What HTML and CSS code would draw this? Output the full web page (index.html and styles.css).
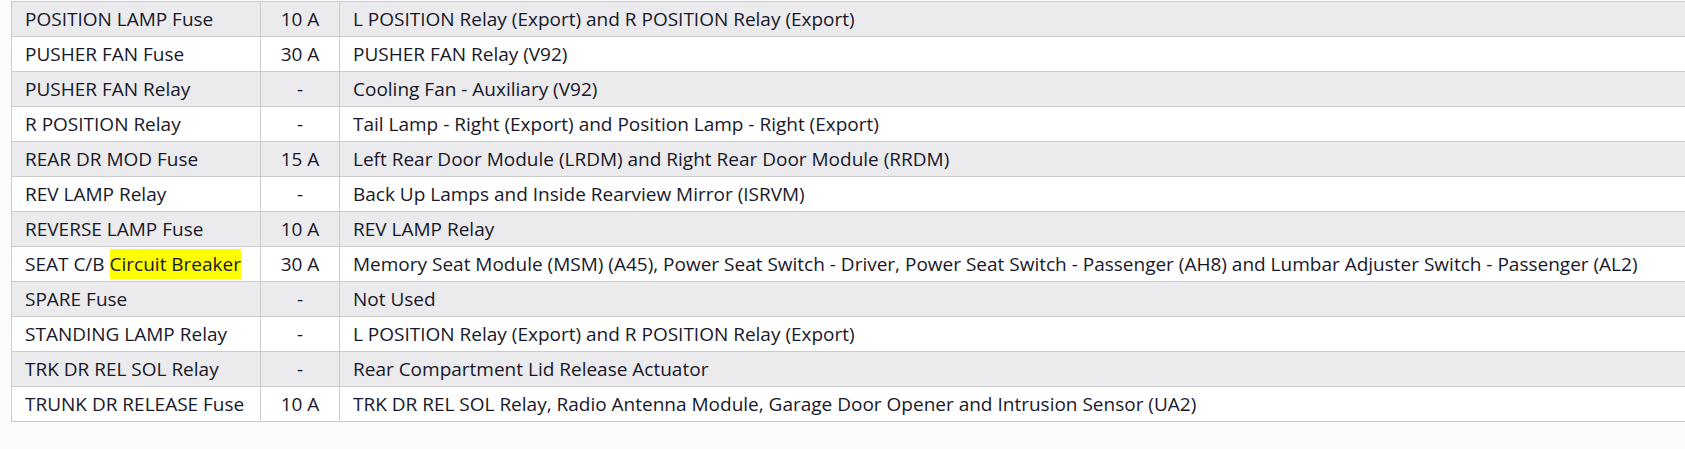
FILE: index.html
```html
<!DOCTYPE html>
<html>
<head>
<meta charset="utf-8">
<link rel="stylesheet" href="styles.css">
</head>
<body>
<div class="wrap">
<table class="fuses">
<colgroup><col class="c1"><col class="c2"><col class="c3"></colgroup>
<tbody>
<tr class="alt"><td>POSITION LAMP Fuse</td><td class="amp">10 A</td><td>L POSITION Relay (Export) and R POSITION Relay (Export)</td></tr>
<tr><td>PUSHER FAN Fuse</td><td class="amp">30 A</td><td>PUSHER FAN Relay (V92)</td></tr>
<tr class="alt"><td>PUSHER FAN Relay</td><td class="amp">-</td><td>Cooling Fan - Auxiliary (V92)</td></tr>
<tr><td>R POSITION Relay</td><td class="amp">-</td><td>Tail Lamp - Right (Export) and Position Lamp - Right (Export)</td></tr>
<tr class="alt"><td>REAR DR MOD Fuse</td><td class="amp">15 A</td><td>Left Rear Door Module (LRDM) and Right Rear Door Module (RRDM)</td></tr>
<tr><td>REV LAMP Relay</td><td class="amp">-</td><td>Back Up Lamps and Inside Rearview Mirror (ISRVM)</td></tr>
<tr class="alt"><td>REVERSE LAMP Fuse</td><td class="amp">10 A</td><td>REV LAMP Relay</td></tr>
<tr><td>SEAT C/B <mark class="hl">Circuit Breaker</mark></td><td class="amp">30 A</td><td>Memory Seat Module (MSM) (A45), Power Seat Switch - Driver, Power Seat Switch - Passenger (AH8) and Lumbar Adjuster Switch - Passenger (AL2)</td></tr>
<tr class="alt"><td>SPARE Fuse</td><td class="amp">-</td><td>Not Used</td></tr>
<tr><td>STANDING LAMP Relay</td><td class="amp">-</td><td>L POSITION Relay (Export) and R POSITION Relay (Export)</td></tr>
<tr class="alt"><td>TRK DR REL SOL Relay</td><td class="amp">-</td><td>Rear Compartment Lid Release Actuator</td></tr>
<tr><td>TRUNK DR RELEASE Fuse</td><td class="amp">10 A</td><td>TRK DR REL SOL Relay, Radio Antenna Module, Garage Door Opener and Intrusion Sensor (UA2)</td></tr>
</tbody>
</table>
</div>
</body>
</html>
```

FILE: styles.css
```css
html, body {
  margin: 0;
  padding: 0;
  background: #fcfcfc;
  overflow: hidden;
}
.wrap {
  padding: 1px 0 0 11px;
}
.fuses {
  border-collapse: collapse;
  table-layout: fixed;
  width: 1700px;
  font-family: "Open Sans", "Liberation Sans", Arial, sans-serif;
  font-size: 19px;
  color: #18182a;
}
.c1 { width: 249px; }
.c2 { width: 79px; }
.fuses td {
  border: 1px solid #cbcbcb;
  padding: 7px 13px 7px 13px;
  line-height: 20px;
  height: 20px;
  white-space: nowrap;
  background: #ffffff;
  text-align: left;
}
.fuses tr.alt td {
  background: #ebebed;
}
.fuses td.amp {
  text-align: center;
  padding-left: 6px;
  padding-right: 6px;
}
.hl {
  background: #ffff00;
  color: inherit;
  padding: 2px 0;
}
```
